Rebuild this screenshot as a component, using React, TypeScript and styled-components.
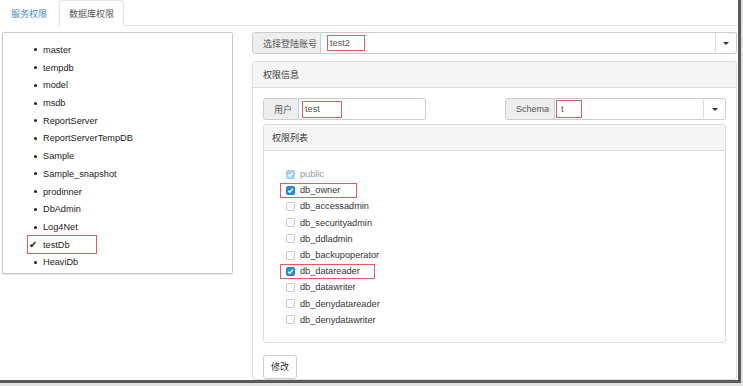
import React from "react";
import styled, { createGlobalStyle } from "styled-components";

const GlobalStyle = createGlobalStyle`
  html, body { margin: 0; padding: 0; background: #fff; }
  body {
    font-family: "Liberation Sans", "Noto Sans CJK SC", Arial, sans-serif;
    font-size: 9.2px;
    color: #333;
  }
  * { box-sizing: border-box; }
`;

const RED = "#e35a61";

const Frame = styled.div`
  width: 743px;
  height: 386px;
  background: #e2e2e2;
  overflow: hidden;
`;

const Screen = styled.div`
  width: 741px;
  height: 383px;
  background: #fff;
  border-right: 3px solid #5a5a5a;
  border-bottom: 3px solid #5a5a5a;
  overflow: hidden;
  display: flex;
  flex-direction: column;
`;

const TabBar = styled.div`
  display: flex;
  gap: 2px;
  height: 26px;
  padding-left: 1px;
  border-bottom: 1px solid #e4e4e4;
  flex-shrink: 0;
`;

const Tab = styled.div<{ $active?: boolean }>`
  height: 26px;
  margin-bottom: -1px;
  padding: 0 9px;
  display: flex;
  align-items: center;
  font-size: 9px;
  color: ${(p) => (p.$active ? "#555" : "#3d8cca")};
  background: #fff;
  border: 1px solid ${(p) => (p.$active ? "#e4e4e4" : "transparent")};
  border-bottom-color: ${(p) => (p.$active ? "#fff" : "transparent")};
  border-radius: 3px 3px 0 0;
`;

const Content = styled.div`
  flex: 1;
  display: flex;
  align-items: flex-start;
  padding: 6px 0 0 2px;
  min-height: 0;
`;

const LeftPanel = styled.div`
  width: 231px;
  height: 242px;
  border: 1px solid #c9c9c9;
  border-radius: 2px;
  box-shadow: 0 1px 1px rgba(0, 0, 0, 0.1);
  padding-top: 8px;
  flex-shrink: 0;
`;

const DbItem = styled.div<{ $selected?: boolean }>`
  height: 17.73px;
  display: flex;
  align-items: center;
  padding-left: ${(p) => (p.$selected ? "24px" : "31px")};
  color: #222;
`;

const Bullet = styled.span`
  width: 3px;
  height: 3px;
  border-radius: 50%;
  background: #222;
  margin-right: 6px;
  flex-shrink: 0;
`;

const Mark = styled.span<{ $on?: boolean; $w?: number; $h?: number; $pl?: number }>`
  display: inline-flex;
  align-items: center;
  flex-shrink: 0;
  width: ${(p) => (p.$w ? `${p.$w}px` : "auto")};
  height: ${(p) => (p.$h ? `${p.$h}px` : "auto")};
  padding-left: ${(p) => (p.$pl !== undefined ? p.$pl : 0)}px;
  border: 1px solid ${(p) => (p.$on ? RED : "transparent")};
`;

const Check = styled.span`
  width: 14px;
  font-family: "DejaVu Sans", sans-serif;
  font-size: 10px;
  color: #1a1a1a;
  line-height: 1;
`;

const RightCol = styled.div`
  margin-left: 19px;
  width: 485px;
  align-self: stretch;
  display: flex;
  flex-direction: column;
`;

const InputGroup = styled.div<{ $w?: number }>`
  display: flex;
  height: 22px;
  width: ${(p) => (p.$w ? `${p.$w}px` : "auto")};
  flex-shrink: 0;
`;

const Addon = styled.div<{ $w: number }>`
  width: ${(p) => p.$w}px;
  flex-shrink: 0;
  display: flex;
  align-items: center;
  padding-left: 10px;
  background: #eee;
  border: 1px solid #ccc;
  border-radius: 3px 0 0 3px;
  color: #555;
  font-size: 9px;
`;

const Field = styled.div<{ $pl: number; $round?: boolean }>`
  flex: 1;
  display: flex;
  align-items: center;
  padding-left: ${(p) => p.$pl}px;
  border: 1px solid #ccc;
  border-left: 0;
  border-radius: ${(p) => (p.$round ? "0 3px 3px 0" : "0")};
  background: #fff;
  color: #555;
`;

const DropButton = styled.div<{ $w: number }>`
  width: ${(p) => p.$w}px;
  flex-shrink: 0;
  display: flex;
  align-items: center;
  justify-content: center;
  border: 1px solid #ccc;
  border-left: 1px solid #ddd;
  margin-left: -1px;
  border-radius: 0 3px 3px 0;
  background: #fff;
`;

const Caret = styled.span`
  width: 0;
  height: 0;
  border-left: 3px solid transparent;
  border-right: 3px solid transparent;
  border-top: 3px solid #333;
`;

const Panel = styled.div<{ $grow?: boolean }>`
  margin-top: ${(p) => (p.$grow ? 7 : 4)}px;
  flex: ${(p) => (p.$grow ? "1" : "none")};
  border: 1px solid #ddd;
  border-radius: 3px;
  background: #fff;
`;

const PanelHeading = styled.div<{ $pl: number }>`
  height: 26px;
  display: flex;
  align-items: center;
  padding-left: ${(p) => p.$pl}px;
  background: #f5f5f5;
  border-bottom: 1px solid #ddd;
  border-radius: 3px 3px 0 0;
  color: #333;
  font-size: 9px;
`;

const PanelBody = styled.div`
  padding: 10px 10px 0 10px;
  display: flex;
  flex-direction: column;
`;

const FieldRow = styled.div`
  display: flex;
  justify-content: space-between;
`;

const CheckList = styled.div`
  padding: 15px 0 14px 16px;
`;

const CheckRow = styled.div`
  height: 16.2px;
  display: flex;
  align-items: center;
`;

const Box = styled.span<{ $checked?: boolean; $disabled?: boolean }>`
  width: 9px;
  height: 9px;
  border-radius: 2px;
  flex-shrink: 0;
  display: flex;
  align-items: center;
  justify-content: center;
  background: ${(p) =>
    p.$checked ? (p.$disabled ? "#a9d1ef" : "#2d8fd9") : "#fff"};
  border: 1px solid
    ${(p) => (p.$checked ? (p.$disabled ? "#9fcaea" : "#2480c6") : "#c8c8c8")};
`;

const CheckLabel = styled.span<{ $muted?: boolean }>`
  margin-left: 5px;
  color: ${(p) => (p.$muted ? "#999" : "#333")};
  white-space: nowrap;
`;

const Button = styled.div`
  margin-top: 12px;
  width: 34px;
  height: 24px;
  display: flex;
  align-items: center;
  justify-content: center;
  border: 1px solid #ccc;
  border-radius: 3px;
  background: #fff;
  color: #333;
  font-size: 9px;
`;

const dbs = [
  "master",
  "tempdb",
  "model",
  "msdb",
  "ReportServer",
  "ReportServerTempDB",
  "Sample",
  "Sample_snapshot",
  "prodinner",
  "DbAdmin",
  "Log4Net",
  "testDb",
  "HeaviDb",
];

type Role = { name: string; checked?: boolean; disabled?: boolean; mark?: number };

const roles: Role[] = [
  { name: "public", checked: true, disabled: true },
  { name: "db_owner", checked: true, mark: 77 },
  { name: "db_accessadmin" },
  { name: "db_securityadmin" },
  { name: "db_ddladmin" },
  { name: "db_backupoperator" },
  { name: "db_datareader", checked: true, mark: 95 },
  { name: "db_datawriter" },
  { name: "db_denydatareader" },
  { name: "db_denydatawriter" },
];

const Tick = () => (
  <svg width="7" height="7" viewBox="0 0 8 8">
    <path d="M1.3 4.2 L3.2 6 L6.8 1.8" fill="none" stroke="#fff" strokeWidth="1.5" />
  </svg>
);

export default function App() {
  return (
    <>
      <GlobalStyle />
      <Frame>
        <Screen>
          <TabBar>
            <Tab>服务权限</Tab>
            <Tab $active>数据库权限</Tab>
          </TabBar>
          <Content>
            <LeftPanel>
              {dbs.map((db) =>
                db === "testDb" ? (
                  <DbItem key={db} $selected>
                    <Mark $on $w={70} $h={19} $pl={1}>
                      <Check>✔</Check>
                      {db}
                    </Mark>
                  </DbItem>
                ) : (
                  <DbItem key={db}>
                    <Bullet />
                    {db}
                  </DbItem>
                )
              )}
            </LeftPanel>
            <RightCol>
              <InputGroup>
                <Addon $w={69}>选择登陆账号</Addon>
                <Field $pl={6}>
                  <Mark $on $w={38} $h={16} $pl={2}>
                    test2
                  </Mark>
                </Field>
                <DropButton $w={22}>
                  <Caret />
                </DropButton>
              </InputGroup>
              <Panel $grow>
                <PanelHeading $pl={10}>权限信息</PanelHeading>
                <PanelBody>
                  <FieldRow>
                    <InputGroup $w={163}>
                      <Addon $w={36}>用户</Addon>
                      <Field $pl={3} $round>
                        <Mark $on $w={40} $h={17} $pl={2}>
                          test
                        </Mark>
                      </Field>
                    </InputGroup>
                    <InputGroup $w={221}>
                      <Addon $w={50}>Schema</Addon>
                      <Field $pl={1}>
                        <Mark $on $w={26} $h={18} $pl={4}>
                          t
                        </Mark>
                      </Field>
                      <DropButton $w={23}>
                        <Caret />
                      </DropButton>
                    </InputGroup>
                  </FieldRow>
                  <Panel>
                    <PanelHeading $pl={8}>权限列表</PanelHeading>
                    <CheckList>
                      {roles.map((r) => (
                        <CheckRow key={r.name}>
                          <Mark $on={!!r.mark} $w={r.mark} $h={15} $pl={5}>
                            <Box $checked={r.checked} $disabled={r.disabled}>
                              {r.checked && <Tick />}
                            </Box>
                            <CheckLabel $muted={r.disabled}>{r.name}</CheckLabel>
                          </Mark>
                        </CheckRow>
                      ))}
                    </CheckList>
                  </Panel>
                  <Button>修改</Button>
                </PanelBody>
              </Panel>
            </RightCol>
          </Content>
        </Screen>
      </Frame>
    </>
  );
}
